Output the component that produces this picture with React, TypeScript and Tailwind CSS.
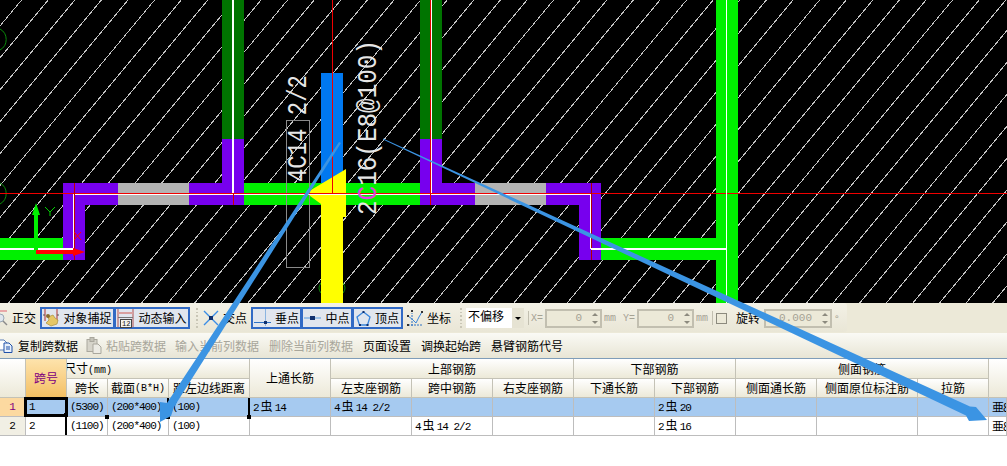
import React from "react";

const H = 303;
const hatch = Array.from({ length: 60 }, (_, i) => -5 + i * 26.6);

function Canvas() {
  return (
    <svg width="1007" height="303" viewBox="0 0 1007 303" className="block bg-black">
      <g stroke="#c4c4c4" strokeWidth="1" shapeRendering="crispEdges">
        {hatch.map((x) => (
          <line key={x} x1={x} y1={0} x2={x - H / 1.2} y2={H} />
        ))}
      </g>
      <g fill="none" stroke="#0a8a0a" strokeWidth="1">
        <path d="M0 29 A12 12 0 0 1 0 50" />
        <path d="M0 183 A12 12 0 0 1 0 204" />
        <path d="M321 283 A8 8 0 0 0 321 293" />
        <path d="M343 283 A8 8 0 0 1 343 293" />
      </g>
      <g shapeRendering="crispEdges">
        <rect x="222" y="0" width="22" height="139" fill="#007400" />
        <rect x="420" y="0" width="22" height="139" fill="#007400" />
        <rect x="716" y="0" width="22" height="303" fill="#00f000" />
        <rect x="601" y="238" width="115" height="22" fill="#00f000" />
        <rect x="0" y="238" width="63" height="22" fill="#00f000" />
        <rect x="244" y="183" width="176" height="22" fill="#00f000" />
        <rect x="222" y="139" width="22" height="66" fill="#7700ee" />
        <rect x="420" y="139" width="22" height="66" fill="#7700ee" />
        <rect x="63" y="183" width="181" height="22" fill="#7700ee" />
        <rect x="420" y="183" width="181" height="22" fill="#7700ee" />
        <rect x="63" y="183" width="22" height="77" fill="#7700ee" />
        <rect x="579" y="183" width="22" height="77" fill="#7700ee" />
        <rect x="118" y="183" width="71" height="22" fill="#b3b3b3" />
        <rect x="475" y="183" width="71" height="22" fill="#b3b3b3" />
        <rect x="321" y="73" width="22" height="110" fill="#0078f0" />
      </g>
      <polygon points="306,193 346,169 346,217 343,217 343,303 321,303 321,204" fill="#ffff00" />
      <rect x="286.5" y="120.5" width="23" height="147" fill="none" stroke="#8a8a8a" />
      <g shapeRendering="crispEdges">
        <rect x="0" y="193" width="1007" height="1" fill="#f00000" />
        <rect x="73" y="194" width="517" height="1" fill="#ffffff" />
        <rect x="232" y="0" width="2" height="193" fill="#ffffff" />
        <rect x="233" y="193" width="1" height="12" fill="#d40000" />
        <rect x="431" y="0" width="1" height="193" fill="#ffffff" />
        <rect x="430" y="0" width="1" height="205" fill="#e00000" />
        <rect x="332" y="0" width="1" height="193" fill="#f00000" />
        <rect x="73" y="195" width="1" height="55" fill="#ffffff" />
        <rect x="74" y="183" width="1" height="77" fill="#c00000" />
        <rect x="590" y="194" width="1" height="55" fill="#ffffff" />
        <rect x="591" y="183" width="1" height="77" fill="#b00000" />
        <rect x="591" y="248" width="135" height="2" fill="#ffffff" />
        <rect x="726" y="0" width="1" height="303" fill="#ffffff" />
        <rect x="0" y="248" width="73" height="2" fill="#ffffff" />
      </g>
      <path d="M74 232 L81 240 M81 232 L74 240" stroke="#ff0000" strokeWidth="1" />
      <g fill="#00f000">
        <rect x="34" y="212" width="4" height="41" />
        <polygon points="36,203 40,215 32,215" />
      </g>
      <path d="M45 207 L50 212 L55 207 M50 212 L50 216" stroke="#00d000" strokeWidth="1" fill="none" />
      <g fill="#ff0000">
        <rect x="36" y="250" width="38" height="4" />
        <polygon points="85,252 73,248 73,256" />
      </g>
      <g fill="#e6e6e6" className="font-['Liberation_Mono',monospace]" fontSize="27">
        <text transform="translate(306 182) rotate(-90)" textLength="107" lengthAdjust="spacingAndGlyphs">4C14 2/2</text>
        <text transform="translate(376 215) rotate(-90)" textLength="175" lengthAdjust="spacingAndGlyphs">
          2<tspan fill="#e040e0">C</tspan>16(E8@100)
        </text>
      </g>
    </svg>
  );
}

const Grip = () => (
  <div className="flex flex-col gap-[2px] w-[3px] h-[20px] justify-center">
    {[0, 1, 2, 3, 4, 5].map((i) => (
      <div key={i} className="w-[2px] h-[2px] bg-[#c9c6b6]" />
    ))}
  </div>
);

function SnapIcon() {
  return (
    <svg width="16" height="18" viewBox="0 0 16 18">
      <path d="M2 0V12M14 0V12" stroke="#b03030" strokeWidth="1" />
      <path d="M0 6H2M14 6H16" stroke="#555" />
      <path d="M5 8 L10 6 L12 9 L15 11 L14 15 L8 17 L3 14 L6 11Z" fill="#e6c766" stroke="#a88f3c" strokeWidth="0.7" />
      <circle cx="5" cy="7" r="2" fill="#8a6d2c" />
    </svg>
  );
}
function DynIcon() {
  return (
    <svg width="17" height="19" viewBox="0 0 17 19">
      <path d="M1 0V18M16 0V18" stroke="#b05050" />
      <rect x="1" y="3" width="15" height="2" fill="#d8a0a0" />
      <rect x="1" y="8" width="15" height="1" fill="#777" />
      <rect x="3.5" y="10.5" width="11" height="8" fill="#f4f4ee" stroke="#444" />
      <text x="5" y="17" fontSize="7" fill="#111" className="font-['Liberation_Mono',monospace]">12</text>
    </svg>
  );
}
const CrossIcon = () => (
  <svg width="16" height="16" viewBox="0 0 16 16">
    <path d="M1 1L15 15M15 1L1 15" stroke="#3a8ee6" strokeWidth="1.4" />
    <rect x="6" y="6" width="4" height="4" fill="#10306e" />
  </svg>
);
const PerpIcon = () => (
  <svg width="17" height="18" viewBox="0 0 17 18">
    <path d="M11.5 0V17" stroke="#8ab4e0" strokeWidth="1" />
    <path d="M0 13.5H17" stroke="#2f72c4" strokeWidth="1" />
    <rect x="10" y="12" width="3" height="3" fill="#10306e" />
  </svg>
);
const MidIcon = () => (
  <svg width="17" height="8" viewBox="0 0 17 8">
    <path d="M0 4H17" stroke="#7fb0e6" strokeWidth="1.4" />
    <rect x="6" y="2" width="5" height="4" fill="#10306e" />
  </svg>
);
const PentIcon = () => (
  <svg width="15" height="15" viewBox="0 0 15 15">
    <path d="M7.5 1L14 6L11.5 14H3.5L1 6Z" fill="none" stroke="#3a86dc" strokeWidth="1.3" />
    <rect x="6.5" y="0" width="2" height="2" fill="#10306e" />
    <rect x="3" y="13" width="2" height="2" fill="#10306e" />
    <rect x="10.5" y="13" width="2" height="2" fill="#10306e" />
  </svg>
);
const CoordIcon = () => (
  <svg width="17" height="17" viewBox="0 0 17 17">
    <path d="M5 16V3M1 15H16" stroke="#2f72c4" strokeDasharray="2 1" />
    <path d="M1 6L5 9L9 13L12 7L15 2" stroke="#3a86dc" fill="none" />
    <g fill="#333">
      <rect x="0" y="5" width="2" height="2" />
      <rect x="4" y="0" width="2" height="2" />
      <rect x="14" y="1" width="2" height="2" />
      <rect x="0" y="14" width="2" height="2" />
    </g>
  </svg>
);
const CopyIcon = () => (
  <svg width="13" height="14" viewBox="0 0 13 14">
    <path d="M-3 1H4L7 4V11H-3Z" fill="#fff" stroke="#5a7fb8" />
    <path d="M4 4H9L12 7V13.5H4Z" fill="#e8f0fb" stroke="#1f50a8" />
    <path d="M6 8H10M6 10H10" stroke="#1f50a8" />
  </svg>
);
const PasteIcon = () => (
  <svg width="16" height="17" viewBox="0 0 16 17">
    <rect x="1" y="2.5" width="10" height="12" fill="#d6d4ca" stroke="#a9a79d" />
    <rect x="4" y="0.5" width="4" height="4" fill="#c4c2b8" stroke="#a9a79d" />
    <path d="M7 7H12L15 10V16.5H7Z" fill="#ecebe4" stroke="#a9a79d" />
  </svg>
);

const Snap = ({ w, children }: { w: string; children: React.ReactNode }) => (
  <div className={`${w} h-[22px] flex items-center justify-center gap-[4px] border-2 border-[#316ac5] bg-[#e1e6ee] -ml-px first:ml-0`}>{children}</div>
);

const Spin = () => (
  <div className="w-[10px] h-full flex flex-col items-center justify-center gap-[5px]">
    <div className="w-0 h-0 border-x-[3px] border-x-transparent border-b-[3px] border-b-[#8c8a7e]" />
    <div className="w-0 h-0 border-x-[3px] border-x-transparent border-t-[3px] border-t-[#8c8a7e]" />
  </div>
);

const NumBox = ({ w, v }: { w: string; v: string }) => (
  <div className={`${w} h-[19px] flex items-center justify-end border-2 border-[#c2bfb0] bg-[#ece9d8] text-[#a5a294] text-[11px] font-['Liberation_Mono',monospace]`}>
    <span>{v}</span>
    <span className="w-[8px]" />
    <Spin />
  </div>
);

function Toolbar1() {
  return (
    <div className="h-[30px] bg-[#ece9d8] flex items-start">
      <div className="w-[847px] h-[29px] pt-px rounded-r-[3px] bg-gradient-to-b from-[#f3f1e6] to-[#e9e6d6] flex items-center text-[12px] text-black">
        <svg width="8" height="18" viewBox="0 0 8 18" className="shrink-0">
          <path d="M0 2H7" stroke="#e8a8a8" strokeWidth="2" />
          <circle cx="0" cy="9" r="4" fill="#dfe6ee" stroke="#9aa7b5" />
          <path d="M3 12L7 16" stroke="#8a8a8a" strokeWidth="1.5" />
        </svg>
        <span className="ml-[4px] w-[29px]">正交</span>
        <Snap w="w-[75px]"><SnapIcon /><span>对象捕捉</span></Snap>
        <Snap w="w-[76px]"><DynIcon /><span>动态输入</span></Snap>
        <div className="ml-[6px]"><Grip /></div>
        <div className="ml-[4px] w-[49px] flex items-center gap-[4px]"><CrossIcon /><span>交点</span></div>
        <Snap w="w-[51px]"><PerpIcon /><span>垂点</span></Snap>
        <Snap w="w-[52px]"><MidIcon /><span>中点</span></Snap>
        <Snap w="w-[51px]"><PentIcon /><span>顶点</span></Snap>
        <div className="ml-[4px] w-[50px] flex items-center gap-[3px]"><CoordIcon /><span>坐标</span></div>
        <div className="ml-[3px]"><Grip /></div>
        <div className="ml-[3px] w-[58px] h-[20px] flex bg-white">
          <span className="w-[46px] pl-[2px] leading-[16px]">不偏移</span>
          <div className="w-[12px] h-[20px] bg-[#e6e3d3] flex items-center justify-center">
            <div className="w-0 h-0 border-x-[3px] border-x-transparent border-t-[3px] border-t-black" />
          </div>
        </div>
        <div className="ml-[4px] w-px h-[14px] bg-[#c2bfb0]" />
        <span className="ml-[2px] w-[14px] text-[10px] text-[#a5a294] font-['Liberation_Mono',monospace]">X=</span>
        <NumBox w="w-[57px]" v="0" />
        <span className="ml-[2px] w-[19px] text-[10px] text-[#a5a294] font-['Liberation_Mono',monospace]">mm</span>
        <span className="w-[14px] text-[10px] text-[#a5a294] font-['Liberation_Mono',monospace]">Y=</span>
        <NumBox w="w-[57px]" v="0" />
        <span className="ml-[2px] w-[16px] text-[10px] text-[#a5a294] font-['Liberation_Mono',monospace]">mm</span>
        <div className="w-px h-[14px] bg-[#c2bfb0]" />
        <div className="ml-[3px] w-[11px] h-[11px] border border-[#8c8a7e] bg-[#ece9d8]" />
        <span className="ml-[9px] w-[28px]">旋转</span>
        <NumBox w="w-[68px]" v="0.000" />
        <span className="ml-[3px] text-[10px] text-[#a5a294]">°</span>
      </div>
    </div>
  );
}

function Toolbar2() {
  return (
    <div className="h-[25px] bg-gradient-to-b from-[#fafaf5] to-[#e8e5d5] flex items-center text-[12px] whitespace-nowrap">
      <CopyIcon />
      <span className="ml-[5px] w-[60px] text-black">复制跨数据</span>
      <span className="ml-[8px]"><PasteIcon /></span>
      <span className="ml-[4px] w-[60px] text-[#a8a69b]">粘贴跨数据</span>
      <span className="ml-[9px] w-[84px] text-[#a8a69b]">输入当前列数据</span>
      <span className="ml-[10px] w-[84px] text-[#a8a69b]">删除当前列数据</span>
      <span className="ml-[10px] w-[48px] text-black">页面设置</span>
      <span className="ml-[10px] w-[60px] text-black">调换起始跨</span>
      <span className="ml-[10px] text-black">悬臂钢筋代号</span>
    </div>
  );
}

const hd = "flex items-center justify-center border-r border-b border-[#c4c2b6] bg-gradient-to-b from-white to-[#ece9d8] text-[12px] text-black whitespace-nowrap overflow-hidden";
const dc = "relative flex items-center pl-[3px] border-r border-b border-[#bdbdbd] text-[11px] tracking-[-1px] text-black whitespace-nowrap font-['Liberation_Mono','Noto_Sans_CJK_SC',monospace]";

const Bar = ({ n, q }: { n: string; q: string }) => (
  <span>{n}<span className="mx-[2px] text-[12px] tracking-normal font-['Noto_Sans_CJK_SC',sans-serif]">虫</span>{q}</span>
);
const Handle = () => <span className="absolute right-[-2px] bottom-[-3px] w-[4px] h-[4px] bg-black z-10" />;
const Tick = () => <span className="absolute right-[-1px] top-0 bottom-0 w-[2px] bg-black z-10" />;

function Row({ n, hot, cells }: { n: string; hot: boolean; cells: React.ReactNode[] }) {
  const bg = hot ? "bg-[#a6caf0]" : "bg-white";
  return (
    <>
      <div className={`flex items-center justify-center border-r border-b border-[#bdbdbd] text-[11px] font-['Liberation_Mono',monospace] ${hot ? "bg-[#fcd9a0] text-[#800080]" : "bg-[#f1efe4] text-black"}`}>{n}</div>
      {cells.map((c, i) => (
        <div key={i} className={`${dc} ${bg} ${i === 13 ? "overflow-hidden" : ""}`}>
          {c}
          {hot && i === 0 && (
            <span className="absolute left-[-2px] top-[-1px] w-[44px] h-[20px] border-[3px] border-black z-10">
              <span className="absolute right-[-3px] bottom-[-3px] w-[4px] h-[4px] bg-black" />
            </span>
          )}
          {!hot && i === 0 && <Tick />}
          {hot && i === 1 && <Handle />}
          {hot && (i === 2 || i === 3) && <><Tick /><Handle /></>}
        </div>
      ))}
    </>
  );
}

function Table() {
  return (
    <div className="border-t border-[#7f9db9] grid grid-cols-[26px_41px_41px_61px_81px_81px_81px_81px_81px_81px_81px_81px_101px_71px_18px] grid-rows-[20px_19px_19px_19px]">
      <div className={`${hd} row-span-2`} />
      <div className="row-span-2 flex items-center justify-center border-r border-b border-[#c4c2b6] bg-gradient-to-b from-[#fde3ac] to-[#f4c062] text-[12px] text-[#800080]">跨号</div>
      <div className={`${hd} col-span-3 !justify-start pl-0`}><span className="-ml-[3px]">尺寸<span className="text-[10px] font-['Liberation_Mono',monospace]">(mm)</span></span></div>
      <div className={`${hd} row-span-2`}>上通长筋</div>
      <div className={`${hd} col-span-3`}>上部钢筋</div>
      <div className={`${hd} col-span-2`}>下部钢筋</div>
      <div className={`${hd} col-span-3`}>侧面钢筋</div>
      <div className={`${hd} row-span-2 border-r-0`} />
      <div className={hd}>跨长</div>
      <div className={hd}>截面<span className="text-[10px] font-['Liberation_Mono',monospace]">(B*H)</span></div>
      <div className={hd}>距左边线距离</div>
      <div className={hd}>左支座钢筋</div>
      <div className={hd}>跨中钢筋</div>
      <div className={hd}>右支座钢筋</div>
      <div className={hd}>下通长筋</div>
      <div className={hd}>下部钢筋</div>
      <div className={hd}>侧面通长筋</div>
      <div className={hd}>侧面原位标注筋</div>
      <div className={hd}>拉筋</div>
      <Row n="1" hot cells={["1", "(5300)", "(200*400)", "(100)", <Bar n="2" q="14" />, <Bar n="4" q="14 2/2" />, "", "", "", <Bar n="2" q="20" />, "", "", "", <span className="font-['Noto_Sans_CJK_SC',sans-serif] text-[12px]">亜8</span>]} />
      <Row n="2" hot={false} cells={["2", "(1100)", "(200*400)", "(100)", "", "", <Bar n="4" q="14 2/2" />, "", "", <Bar n="2" q="16" />, "", "", "", <span className="font-['Noto_Sans_CJK_SC',sans-serif] text-[12px]">亜8</span>]} />
    </div>
  );
}

export default function App() {
  return (
    <div className="relative w-[1007px] h-[466px] overflow-hidden bg-white font-['Noto_Sans_CJK_SC',sans-serif]">
      <Canvas />
      <Toolbar1 />
      <Toolbar2 />
      <Table />
      <svg width="1007" height="466" viewBox="0 0 1007 466" className="absolute left-0 top-0 pointer-events-none z-20">
        <polygon points="341,143 174,407 171,416 160,422 160,402 167,403 339,142" fill="#3b94e3" />
        <polygon points="383,138.5 970,406.5 976,407 987,420 969,421 966,415.5 383,139.5" fill="#3b94e3" />
      </svg>
    </div>
  );
}
